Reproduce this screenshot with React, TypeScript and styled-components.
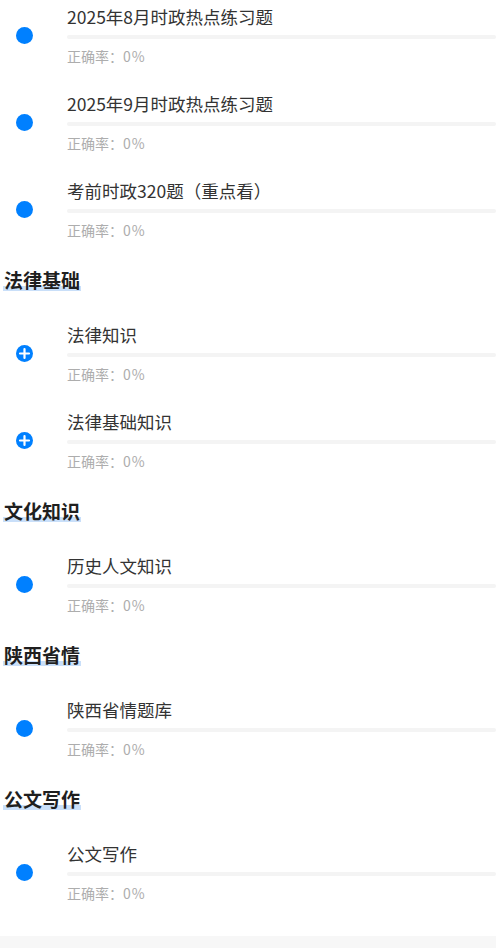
import React from 'react';
import styled, { createGlobalStyle } from 'styled-components';

type Chapter = { title: string; expandable?: boolean; rate?: number };
type Section = { heading?: string; chapters: Chapter[] };

const sections: Section[] = [
  {
    chapters: [
      { title: '2025年8月时政热点练习题' },
      { title: '2025年9月时政热点练习题' },
      { title: '考前时政320题（重点看）' },
    ],
  },
  {
    heading: '法律基础',
    chapters: [
      { title: '法律知识', expandable: true },
      { title: '法律基础知识', expandable: true },
    ],
  },
  { heading: '文化知识', chapters: [{ title: '历史人文知识' }] },
  { heading: '陕西省情', chapters: [{ title: '陕西省情题库' }] },
  { heading: '公文写作', chapters: [{ title: '公文写作' }] },
];

const GlobalStyle = createGlobalStyle`
  html, body {
    margin: 0;
    padding: 0;
    background: #f7f7f7;
  }
  body {
    font-family: "Noto Sans CJK SC", Roboto, sans-serif;
  }
`;

const Page = styled.main`
  width: 496px;
  background: #ffffff;
  padding-bottom: 12px;
`;

const Heading = styled.h2`
  margin: 0;
  padding: 4px 0 27px 3px;
  height: 26px;
  line-height: 26px;
`;

const HeadingText = styled.span`
  display: inline-block;
  padding: 0 1px;
  font-size: 19px;
  font-weight: 700;
  color: #1f1f1f;
  background: linear-gradient(
    to bottom,
    transparent 74%,
    #c9dff9 74%,
    #c9dff9 94%,
    transparent 94%
  );
`;

const Row = styled.div`
  display: flex;
  height: 87px;
  box-sizing: border-box;
  padding-top: 5px;
`;

const Marker = styled.div`
  width: 49px;
  flex: none;
  display: flex;
  justify-content: center;
  padding-top: 22px;
`;

const Dot = styled.span`
  display: block;
  width: 17px;
  height: 17px;
  border-radius: 50%;
  background: #0080ff;
`;

const Body = styled.div`
  flex: 1;
  margin-left: 18px;
  min-width: 0;
`;

const Title = styled.div`
  font-size: 17.5px;
  line-height: 24px;
  color: #333333;
  white-space: nowrap;
`;

const Track = styled.div`
  margin-top: 6px;
  height: 4px;
  border-radius: 2px;
  background: #f4f4f4;
`;

const Accuracy = styled.div`
  margin-top: 7px;
  font-size: 14px;
  line-height: 20px;
  color: #adadad;
`;

const Rate = styled.span`
  letter-spacing: 1px;
`;

function PlusIcon() {
  return (
    <svg width="17" height="17" viewBox="0 0 17 17">
      <circle cx="8.5" cy="8.5" r="8.5" fill="#0080ff" />
      <path d="M8.5 4v9M4 8.5h9" stroke="#fff" strokeWidth="2.2" strokeLinecap="round" />
    </svg>
  );
}

function ChapterRow({ title, expandable, rate = 0 }: Chapter) {
  return (
    <Row>
      <Marker>{expandable ? <PlusIcon /> : <Dot />}</Marker>
      <Body>
        <Title>{title}</Title>
        <Track />
        <Accuracy>
          正确率：<Rate>{rate}%</Rate>
        </Accuracy>
      </Body>
    </Row>
  );
}

export default function App() {
  return (
    <>
      <GlobalStyle />
      <Page>
        {sections.map((section, i) => (
          <section key={i}>
            {section.heading && (
              <Heading>
                <HeadingText>{section.heading}</HeadingText>
              </Heading>
            )}
            {section.chapters.map((c) => (
              <ChapterRow key={c.title} {...c} />
            ))}
          </section>
        ))}
      </Page>
    </>
  );
}
